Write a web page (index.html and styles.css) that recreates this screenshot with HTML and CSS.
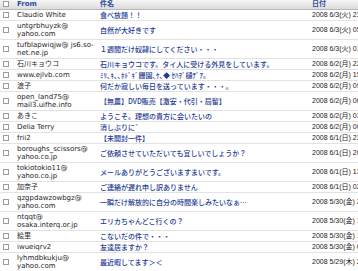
FILE: index.html
```html
<!DOCTYPE html>
<html lang="ja">
<head>
  <meta charset="UTF-8">
  <meta name="viewport" content="width=device-width, initial-scale=1.0">
  <title>受信箱</title>
  <link rel="stylesheet" href="styles.css">
</head>
<body>
  <table class="mail-list">
    <colgroup>
      <col class="col-check">
      <col class="col-from">
      <col class="col-subject">
      <col class="col-date">
    </colgroup>
    <thead>
      <tr>
        <th class="check"><span class="box"></span></th>
        <th>From</th>
        <th>件名</th>
        <th>日付</th>
      </tr>
    </thead>
    <tbody>
      <tr>
        <td class="check"><span class="box"></span></td>
        <td class="from">Claudio White</td>
        <td class="subject">食べ放題！！</td>
        <td class="date">2008 6/3(火) 23:41</td>
      </tr>
      <tr>
        <td class="check"><span class="box"></span></td>
        <td class="from">untgrbhuyzk@<br>yahoo.com</td>
        <td class="subject">自然が大好きです</td>
        <td class="date">2008 6/3(火) 05:12</td>
      </tr>
      <tr>
        <td class="check"><span class="box"></span></td>
        <td class="from">tufblapwiqjw@ js6.so-<br>net.ne.jp</td>
        <td class="subject">１週間だけ奴隷にしてください・・・</td>
        <td class="date">2008 6/3(火) 01:37</td>
      </tr>
      <tr>
        <td class="check"><span class="box"></span></td>
        <td class="from">石川キョウコ</td>
        <td class="subject">石川キョウコです。タイ人に受ける外見をしています。</td>
        <td class="date">2008 6/2(月) 22:08</td>
      </tr>
      <tr>
        <td class="check"><span class="box"></span></td>
        <td class="from">www.ejlvb.com</td>
        <td class="subject">ﾐﾘ､ｷ､､ﾎﾄﾞｷﾞ饅園､ｹ､◆ ｾﾊｦﾞ樋ﾃﾞｱ｡</td>
        <td class="date">2008 6/2(月) 15:46</td>
      </tr>
      <tr>
        <td class="check"><span class="box"></span></td>
        <td class="from">浪子</td>
        <td class="subject">何だか寂しい毎日を送っています・・・。</td>
        <td class="date">2008 6/2(月) 09:21</td>
      </tr>
      <tr>
        <td class="check"><span class="box"></span></td>
        <td class="from">open_land75@<br>mail3.uifhe.info</td>
        <td class="subject">【無農】DVD販売【激安・代引・局留】</td>
        <td class="date">2008 6/2(月) 06:55</td>
      </tr>
      <tr>
        <td class="check"><span class="box"></span></td>
        <td class="from">あきこ</td>
        <td class="subject">ようこそ。理想の貴方に会いたいの</td>
        <td class="date">2008 6/2(月) 03:10</td>
      </tr>
      <tr>
        <td class="check"><span class="box"></span></td>
        <td class="from">Delia Terry</td>
        <td class="subject">消しぶりに`</td>
        <td class="date">2008 6/2(月) 00:32</td>
      </tr>
      <tr>
        <td class="check"><span class="box"></span></td>
        <td class="from">frii2</td>
        <td class="subject">【未開封一件】</td>
        <td class="date">2008 6/1(日) 23:17</td>
      </tr>
      <tr>
        <td class="check"><span class="box"></span></td>
        <td class="from">boroughs_scissors@<br>yahoo.co.jp</td>
        <td class="subject">ご依頼させていただいても宜しいでしょうか？</td>
        <td class="date">2008 6/1(日) 20:44</td>
      </tr>
      <tr>
        <td class="check"><span class="box"></span></td>
        <td class="from">tokiotokio11@<br>yahoo.co.jp</td>
        <td class="subject">メールありがとうございますまいです。</td>
        <td class="date">2008 6/1(日) 13:29</td>
      </tr>
      <tr>
        <td class="check"><span class="box"></span></td>
        <td class="from">加奈子</td>
        <td class="subject">ご連絡が遅れ申し訳ありません</td>
        <td class="date">2008 6/1(日) 02:03</td>
      </tr>
      <tr>
        <td class="check"><span class="box"></span></td>
        <td class="from">qzgpdawzowbgz@<br>yahoo.com</td>
        <td class="subject">一瞬だけ解放的に自分の時間楽しみたいなぁ…</td>
        <td class="date">2008 5/30(金) 21:50</td>
      </tr>
      <tr>
        <td class="check"><span class="box"></span></td>
        <td class="from">ntqqt@<br>osaka.interq.or.jp</td>
        <td class="subject">エリカちゃんどこ行くの？</td>
        <td class="date">2008 5/30(金) 18:36</td>
      </tr>
      <tr>
        <td class="check"><span class="box"></span></td>
        <td class="from">絵里</td>
        <td class="subject">こないだの件で・・・</td>
        <td class="date">2008 5/30(金) 11:14</td>
      </tr>
      <tr>
        <td class="check"><span class="box"></span></td>
        <td class="from">iwueiqrv2</td>
        <td class="subject">友達居ますか？</td>
        <td class="date">2008 5/30(金) 04:58</td>
      </tr>
      <tr>
        <td class="check"><span class="box"></span></td>
        <td class="from">lyhmdbkukju@<br>yahoo.com</td>
        <td class="subject">最近暇してます＞＜</td>
        <td class="date">2008 5/29(木) 22:40</td>
      </tr>
    </tbody>
  </table>
</body>
</html>
```

FILE: styles.css
```css
* {
  box-sizing: border-box;
}

body {
  margin: 0;
  overflow: hidden;
  background: #ffffff;
  font-family: "DejaVu Sans", "Noto Sans CJK JP", sans-serif;
  font-size: 7px;
  color: #1e1e1e;
}

/* メール一覧 */
.mail-list {
  width: 430px;
  table-layout: fixed;
  border-collapse: collapse;
}

.col-check { width: 15px; }
.col-from { width: 83px; }
.col-subject { width: 212px; }
.col-date { width: 120px; }

.mail-list th {
  height: 9px;
  padding: 0 0 0 2px;
  line-height: 8px;
  text-align: left;
  font-weight: bold;
  color: #2b4c9c;
  background: linear-gradient(#f6f6f6, #dcdcdc);
  border-bottom: 1px solid #b8b8b8;
}

.mail-list td {
  padding: 1px 0 1px 2px;
  line-height: 8px;
  vertical-align: middle;
  white-space: nowrap;
  overflow: hidden;
  border-bottom: 1px solid #e2e2e2;
}

.mail-list .check {
  padding-left: 3px;
}

.box {
  display: inline-block;
  width: 6px;
  height: 6px;
  border: 1px solid #9c9c9c;
  background: #ffffff;
  vertical-align: middle;
}

.from {
  color: #1e1e1e;
}

.subject {
  color: #1c3a94;
  font-family: "Noto Sans CJK JP", "DejaVu Sans", sans-serif;
  font-weight: 500;
}

.date {
  color: #1a1a1a;
  font-family: "Liberation Sans", "Noto Sans CJK JP", sans-serif;
}
```
